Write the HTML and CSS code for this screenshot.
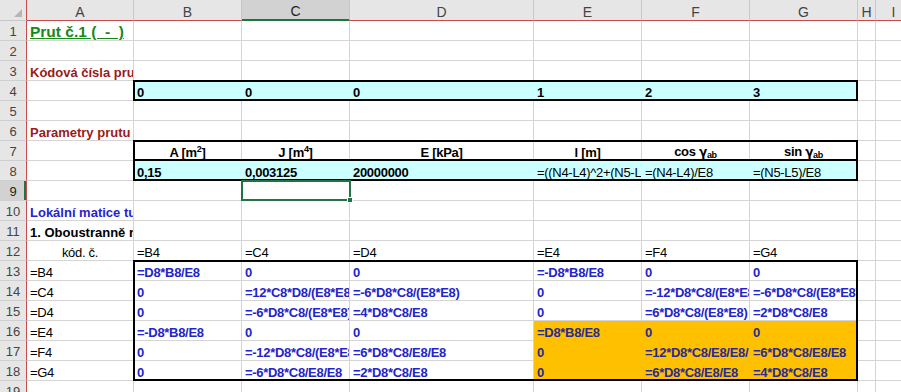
FILE: index.html
```html
<!DOCTYPE html>
<html lang="cs">
<head>
    <meta charset="UTF-8">
    <title>Prut č.1</title>
    <link rel="stylesheet" href="styles.css">
</head>
<body>
    <div class="sheet">
        <div class="cells">
            <div class="hd corner">
                <svg width="8" height="8" viewBox="0 0 8 8"><polygon points="8,0 8,8 0,8" fill="#b5b5b5"/></svg>
            </div>
            <div class="hd">A</div><div class="hd">B</div><div class="hd sel">C</div><div class="hd">D</div><div class="hd">E</div><div class="hd">F</div><div class="hd">G</div><div class="hd">H</div><div class="hd">I</div>

            <div class="rh">1</div>
            <div class="c title">Prut č.1 (  -  )</div><div class="c"></div><div class="c"></div><div class="c"></div><div class="c"></div><div class="c"></div><div class="c"></div><div class="c"></div><div class="c"></div>

            <div class="rh">2</div>
            <div class="c"></div><div class="c"></div><div class="c"></div><div class="c"></div><div class="c"></div><div class="c"></div><div class="c"></div><div class="c"></div><div class="c"></div>

            <div class="rh">3</div>
            <div class="c lbl dred">Kódová čísla prutu</div><div class="c"></div><div class="c"></div><div class="c"></div><div class="c"></div><div class="c"></div><div class="c"></div><div class="c"></div><div class="c"></div>

            <div class="rh">4</div>
            <div class="c"></div>
            <div class="c b cy">0</div><div class="c b cy">0</div><div class="c b cy">0</div><div class="c b cy">1</div><div class="c b cy">2</div><div class="c b cy">3</div>
            <div class="c"></div><div class="c"></div>

            <div class="rh">5</div>
            <div class="c"></div><div class="c"></div><div class="c"></div><div class="c"></div><div class="c"></div><div class="c"></div><div class="c"></div><div class="c"></div><div class="c"></div>

            <div class="rh">6</div>
            <div class="c lbl dred">Parametry prutu</div><div class="c"></div><div class="c"></div><div class="c"></div><div class="c"></div><div class="c"></div><div class="c"></div><div class="c"></div><div class="c"></div>

            <div class="rh">7</div>
            <div class="c"></div>
            <div class="c b ctr"><span>A [m<sup>2</sup>]</span></div>
            <div class="c b ctr"><span>J [m<sup>4</sup>]</span></div>
            <div class="c b ctr"><span>E [kPa]</span></div>
            <div class="c b ctr"><span>l [m]</span></div>
            <div class="c b ctr"><span>cos <span class="gm">γ</span><sub>ab</sub></span></div>
            <div class="c b ctr"><span>sin <span class="gm">γ</span><sub>ab</sub></span></div>
            <div class="c"></div><div class="c"></div>

            <div class="rh">8</div>
            <div class="c"></div>
            <div class="c b cy">0,15</div><div class="c b cy">0,003125</div><div class="c b cy">20000000</div>
            <div class="c cy">=((N4-L4)^2+(N5-L5)^2)^0.5</div><div class="c cy">=(N4-L4)/E8</div><div class="c cy">=(N5-L5)/E8</div>
            <div class="c"></div><div class="c"></div>

            <div class="rh sel">9</div>
            <div class="c"></div><div class="c"></div><div class="c"></div><div class="c"></div><div class="c"></div><div class="c"></div><div class="c"></div><div class="c"></div><div class="c"></div>

            <div class="rh">10</div>
            <div class="c lbl blue">Lokální matice tuhosti prutu</div><div class="c"></div><div class="c"></div><div class="c"></div><div class="c"></div><div class="c"></div><div class="c"></div><div class="c"></div><div class="c"></div>

            <div class="rh">11</div>
            <div class="c lbl">1. Oboustranně rámově připojený prut</div><div class="c"></div><div class="c"></div><div class="c"></div><div class="c"></div><div class="c"></div><div class="c"></div><div class="c"></div><div class="c"></div>

            <div class="rh">12</div>
            <div class="c ctr">kód. č.</div>
            <div class="c">=B4</div><div class="c">=C4</div><div class="c">=D4</div><div class="c">=E4</div><div class="c">=F4</div><div class="c">=G4</div>
            <div class="c"></div><div class="c"></div>

            <div class="rh">13</div>
            <div class="c">=B4</div>
            <div class="c k">=D8*B8/E8</div><div class="c k">0</div><div class="c k">0</div><div class="c k">=-D8*B8/E8</div><div class="c k">0</div><div class="c k">0</div>
            <div class="c"></div><div class="c"></div>

            <div class="rh">14</div>
            <div class="c">=C4</div>
            <div class="c k">0</div><div class="c k">=12*C8*D8/(E8*E8*E8)</div><div class="c k">=-6*D8*C8/(E8*E8)</div><div class="c k">0</div><div class="c k">=-12*D8*C8/(E8*E8*E8)</div><div class="c k">=-6*D8*C8/(E8*E8)</div>
            <div class="c"></div><div class="c"></div>

            <div class="rh">15</div>
            <div class="c">=D4</div>
            <div class="c k">0</div><div class="c k">=-6*D8*C8/(E8*E8)</div><div class="c k">=4*D8*C8/E8</div><div class="c k">0</div><div class="c k">=6*D8*C8/(E8*E8)</div><div class="c k">=2*D8*C8/E8</div>
            <div class="c"></div><div class="c"></div>

            <div class="rh">16</div>
            <div class="c">=E4</div>
            <div class="c k">=-D8*B8/E8</div><div class="c k">0</div><div class="c k">0</div><div class="c k or">=D8*B8/E8</div><div class="c k or">0</div><div class="c k or">0</div>
            <div class="c"></div><div class="c"></div>

            <div class="rh">17</div>
            <div class="c">=F4</div>
            <div class="c k">0</div><div class="c k">=-12*D8*C8/(E8*E8*E8)</div><div class="c k">=6*D8*C8/E8/E8</div><div class="c k or">0</div><div class="c k or">=12*D8*C8/E8/E8/E8</div><div class="c k or">=6*D8*C8/E8/E8</div>
            <div class="c"></div><div class="c"></div>

            <div class="rh">18</div>
            <div class="c">=G4</div>
            <div class="c k">0</div><div class="c k">=-6*D8*C8/E8/E8</div><div class="c k">=2*D8*C8/E8</div><div class="c k or">0</div><div class="c k or">=6*D8*C8/E8/E8</div><div class="c k or">=4*D8*C8/E8</div>
            <div class="c"></div><div class="c"></div>

            <div class="rh">19</div>
            <div class="c"></div><div class="c"></div><div class="c"></div><div class="c"></div><div class="c"></div><div class="c"></div><div class="c"></div><div class="c"></div><div class="c"></div>
        </div>

        <!-- borders and selection drawn over the cells -->
        <div class="marks">
            <div class="select select-c9"><span class="handle"></span></div>
            <div class="frame frame-r4"></div>
            <div class="frame frame-r7"></div>
            <div class="frame frame-r8"></div>
            <div class="frame frame-k"></div>
        </div>
    </div>
</body>
</html>
```

FILE: styles.css
```css
* {
    margin: 0;
    padding: 0;
    box-sizing: border-box;
}

body {
    background: #fff;
    overflow: hidden;
    font-family: 'Liberation Sans', Arial, sans-serif;
}

.sheet {
    position: relative;
    width: 901px;
    height: 392px;
    overflow: hidden;
}

.cells,
.marks {
    display: grid;
    grid-template-columns: 27px 107px 108px 108px 184px 108px 108px 108px 18px 36px;
    grid-template-rows: 21px;
    grid-auto-rows: 20px;
}

/* headers */
.hd {
    background: #e6e6e6;
    border-right: 1px solid #c8c8c8;
    border-bottom: 1px solid #c94a4a;
    display: flex;
    justify-content: center;
    align-items: flex-end;
    font-size: 14px;
    line-height: 16px;
    color: #444;
}

.hd.corner {
    border-bottom-color: #c8c8c8;
    border-right-color: #c94a4a;
    justify-content: flex-end;
    padding: 0 4px 3px 0;
}

.hd.corner svg {
    display: block;
}

.hd.sel {
    background: #d2d2d2;
    border-bottom: 2px solid #217346;
    color: #222;
}

.rh {
    background: #e6e6e6;
    border-right: 1px solid #c94a4a;
    border-bottom: 1px solid #cfcfcf;
    display: flex;
    justify-content: center;
    align-items: flex-end;
    padding-bottom: 1px;
    font-size: 13px;
    line-height: 15px;
    color: #444;
}

.rh.sel {
    background: #d2d2d2;
    box-shadow: inset -2px 0 0 #217346;
    color: #222;
}

/* cells */
.c {
    border-right: 1px solid #d4d4d4;
    border-bottom: 1px solid #d4d4d4;
    padding-left: 3px;
    display: flex;
    align-items: flex-end;
    overflow: hidden;
    white-space: pre;
    font-size: 13px;
    line-height: 15px;
    letter-spacing: -0.3px;
    color: #000;
}

.c.ctr {
    justify-content: center;
    padding-left: 0;
}

.b {
    font-weight: bold;
}

.lbl {
    font-weight: bold;
    letter-spacing: 0;
}

.title {
    font-size: 15.5px;
    line-height: 17px;
    letter-spacing: 0;
    font-weight: bold;
    color: #158a15;
    text-decoration: underline;
}

.dred {
    color: #9a1a1a;
}

.blue {
    color: #2424cc;
}

.k {
    font-weight: bold;
    color: #2424cc;
}

.cy {
    background: #ccffff;
    border-color: #ccffff;
}

.or {
    background: #ffc000;
    border-color: #ffc000;
    color: #2a2a96;
}

sup {
    font-size: 9px;
    line-height: 0;
    vertical-align: 5px;
}

.gm {
    font-family: 'DejaVu Sans', sans-serif;
    font-weight: bold;
    font-size: 12px;
}

sub {
    font-weight: bold;
    font-size: 9px;
    line-height: 0;
    vertical-align: -2px;
}

/* overlay marks */
.marks {
    position: absolute;
    top: 0;
    left: 0;
    width: 912px;
    pointer-events: none;
}

.frame {
    border: 2px solid #000;
    margin: -1px 0 0 -1px;
}

.frame-r4 {
    grid-row: 5;
    grid-column: 3 / 9;
}

.frame-r7 {
    grid-row: 8;
    grid-column: 3 / 9;
}

.frame-r8 {
    grid-row: 9;
    grid-column: 3 / 9;
    border-top: none;
    margin-top: 0;
}

.frame-k {
    grid-row: 14 / 20;
    grid-column: 3 / 9;
}

.select {
    position: relative;
    border: 2px solid #217346;
    margin: -1px -1px 0 -1px;
}

.select-c9 {
    grid-row: 10;
    grid-column: 4;
}

.handle {
    position: absolute;
    right: -4px;
    bottom: -4px;
    width: 6px;
    height: 6px;
    background: #217346;
    border: 1px solid #fff;
}
```
